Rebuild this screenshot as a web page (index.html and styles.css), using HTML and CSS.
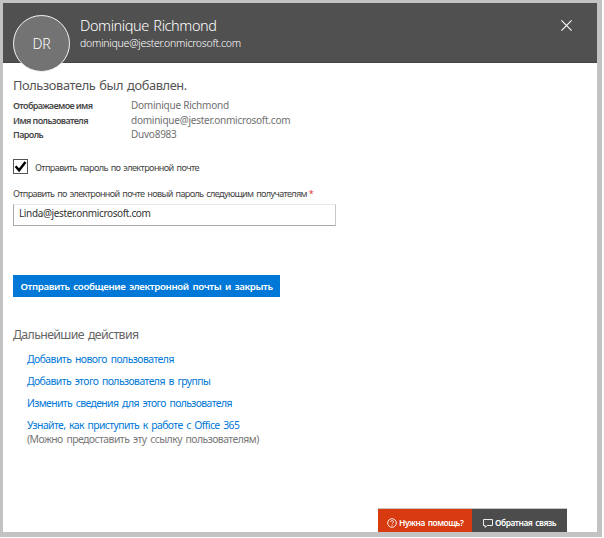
FILE: index.html
```
<!DOCTYPE html>
<html lang="ru">
<head>
<meta charset="utf-8">
<title>Dominique Richmond</title>
<link rel="stylesheet" href="styles.css">
</head>
<body>
<div class="panel">
  <header class="header">
    <div class="avatar"><span>DR</span></div>
    <div class="identity">
      <div class="name">Dominique Richmond</div>
      <div class="email">dominique@jester.onmicrosoft.com</div>
    </div>
    <svg class="close" viewBox="0 0 11 11"><path d="M.4.4l10.2 10.2M10.6.4L.4 10.6"/></svg>
  </header>
  <main class="content">
    <h1 class="heading">Пользователь был добавлен.</h1>
    <dl class="details">
      <dt>Отображаемое имя</dt><dd>Dominique Richmond</dd>
      <dt class="user">Имя пользователя</dt><dd>dominique@jester.onmicrosoft.com</dd>
      <dt class="last">Пароль</dt><dd class="last">Duvo8983</dd>
    </dl>
    <div class="send">
      <span class="checkbox"><svg viewBox="0 0 13 13"><path d="M1.600 6.200l3.500 4L11.500 2"/></svg></span>
      <span class="send-label">Отправить пароль по электронной почте</span>
    </div>
    <div class="field-label">Отправить по электронной почте новый пароль следующим получателям<span class="required">*</span></div>
    <div class="input">Linda@jester.onmicrosoft.com</div>
    <div class="submit">Отправить сообщение электронной почты и закрыть</div>
    <h2 class="next">Дальнейшие действия</h2>
    <ul class="links">
      <li class="link-new">Добавить нового пользователя</li>
      <li class="link-group">Добавить этого пользователя в группы</li>
      <li class="link-edit">Изменить сведения для этого пользователя</li>
      <li class="link-learn">Узнайте, как приступить к работе с Office 365</li>
    </ul>
    <div class="note">(Можно предоставить эту ссылку пользователям)</div>
  </main>
  <footer class="footer">
    <div class="help">
      <svg viewBox="0 0 10 10"><circle cx="5" cy="5" r="4.3"/><path d="M3.6 4c0-1.8 2.9-1.8 2.9-.1C6.500 5 5.100 4.900 5.100 6.200M5.100 7v.9"/></svg>
      <span>Нужна помощь?</span>
    </div>
    <div class="feedback">
      <svg viewBox="0 0 10 10"><path d="M.5 1.500h9v6H4.200L2.200 9.500V7.500H.5z"/></svg>
      <span>Обратная связь</span>
    </div>
  </footer>
</div>
</body>
</html>
```
FILE: styles.css
```
* { box-sizing: border-box; }
body { margin: 0; background: #fff; font-family: "Noto Sans", "Open Sans", sans-serif; color: #444; }
h1, h2, dl, dd, ul { margin: 0; padding: 0; font-weight: 400; }
div, span, h1, h2, dt, dd, li { white-space: nowrap; }

.panel { display: flex; flex-direction: column; width: 602px; height: 537px; border: solid #c3c3c3; border-width: 3px 5px 5px 3px; background: #fff; }

.header { display: flex; flex: none; height: 60px; padding-left: 10px; background: #505050; border-bottom: 1px solid #454343; color: #fff; }
.avatar { display: flex; align-items: center; justify-content: center; flex: none; width: 57px; height: 57px; margin-top: 12px; border: 1.5px solid #f4f4f4; border-radius: 50%; background: #737373; font-size: 14px; font-weight: 300; letter-spacing: -0.2px; }
.identity { margin: 13px 0 0 10px; }
.name { height: 19px; font-size: 14.5px; line-height: 19px; font-weight: 300; letter-spacing: -0.4px; word-spacing: 1px; }
.email { height: 16px; font-size: 10.5px; line-height: 16px; font-weight: 300; letter-spacing: -0.245px; }
.close { width: 11px; height: 11px; margin: 17px 25px 0 auto; fill: none; stroke: #fff; stroke-width: 1.1; }

.content { display: flex; flex: 1; flex-direction: column; padding-left: 10px; }
.heading { height: 20px; margin-top: 12px; font-size: 12.8px; line-height: 20px; letter-spacing: -0.373px; word-spacing: 1px; color: #555; }
.details { display: grid; grid-template-columns: 118px 1fr; grid-template-rows: 15px 15px 14px; margin-top: 3px; line-height: 15px; }
.details dt { font-size: 9px; font-weight: 600; letter-spacing: -0.62px; color: #484848; }
.details dt.user { letter-spacing: -0.6px; }
.details dd { font-size: 10px; letter-spacing: -0.24px; color: #707070; }
.details .last { line-height: 13px; }

.send { display: flex; align-items: center; height: 15px; margin-top: 17px; }
.checkbox { width: 15px; height: 15px; margin-right: 7px; border: 1px solid #555; }
.checkbox svg { display: block; width: 13px; height: 13px; fill: none; stroke: #000; stroke-width: 2.5; }
.send-label { padding-top: 1px; font-size: 9.1px; line-height: 15px; letter-spacing: -0.613px; word-spacing: 1.2px; }
.field-label { height: 16px; margin-top: 12px; font-size: 9.1px; line-height: 16px; letter-spacing: -0.66px; word-spacing: 1.2px; }
.required { margin-left: 2px; color: #d33; }
.input { width: 323px; height: 22px; margin-top: 2px; padding-left: 5px; border: 1px solid #aaa; border-top-color: #e6e6e6; border-right-color: #c4c8c8; font-size: 10px; line-height: 17px; letter-spacing: -0.373px; color: #333; }
.submit { width: 267px; height: 22px; margin-top: 49px; padding-left: 7.5px; background: #0078d7; color: #fff; font-size: 9.7px; line-height: 23px; font-weight: 600; letter-spacing: -0.349px; word-spacing: 1.5px; }
.next { height: 20px; margin-top: 28px; font-size: 12.3px; line-height: 20px; letter-spacing: -0.616px; word-spacing: 1.5px; color: #666; }
.links { margin: 3px 0 0 14px; list-style: none; font-size: 10.4px; line-height: 22px; word-spacing: 1.5px; color: #0078d7; }
.links li { height: 22px; }
.link-new { letter-spacing: -0.53px; }
.link-group { letter-spacing: -0.564px; }
.link-edit { letter-spacing: -0.605px; }
.link-learn { letter-spacing: -0.589px; }
.note { margin: -4px 0 0 14px; font-size: 10.4px; line-height: 14px; letter-spacing: -0.533px; word-spacing: 1.5px; color: #777; }

.footer { display: flex; flex: none; width: 189px; height: 24px; margin-left: 375px; border-top: 1px solid #c6c4c3; color: #fff; font-size: 8.4px; font-weight: 600; letter-spacing: -0.44px; word-spacing: 1px; }
.help, .feedback { display: flex; align-items: center; padding-top: 4px; }
.footer svg { width: 10px; height: 10px; fill: none; stroke: #fff; stroke-width: 0.9; }
.footer span { line-height: 16px; }
.help { width: 94px; padding-left: 9px; gap: 2px; background: #d83b10; }
.feedback { width: 95px; padding-left: 10.5px; gap: 2.5px; background: #4c4c4c; }
```
